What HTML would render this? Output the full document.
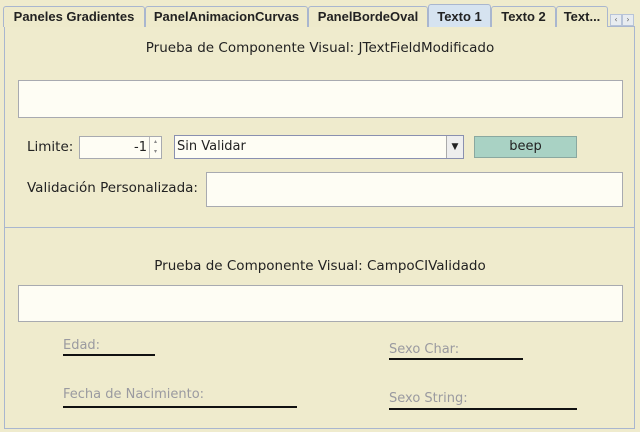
<!DOCTYPE html>
<html><head><meta charset="utf-8"><style>
*{margin:0;padding:0;box-sizing:border-box}
body{width:640px;height:432px;background:#efebcd;font-family:"DejaVu Sans","Liberation Sans",sans-serif;position:relative;overflow:hidden;color:#222}
.a{position:absolute}
.tab{position:absolute;top:6px;height:21px;border:1px solid #a9b6cf;border-bottom:none;border-radius:3px 3px 0 0;background:#eeeacb;font:bold 13px "Liberation Sans",sans-serif;text-align:center;line-height:20px;color:#222;white-space:nowrap}
.in{position:absolute;background:#fefdf4;border:1px solid #a8aab0}
.t{position:absolute;font-size:13.5px;white-space:nowrap}
.g{position:absolute;font-size:13px;color:#9a9aa0;white-space:nowrap}
.ln{position:absolute;height:2px;background:#111}
</style></head><body>
<div class="a" style="left:4px;top:26px;width:631px;height:403px;border:1px solid #a9b6cf"></div>
<div class="tab" style="left:3px;width:142px">Paneles Gradientes</div>
<div class="tab" style="left:145px;width:163px">PanelAnimacionCurvas</div>
<div class="tab" style="left:308px;width:120px">PanelBordeOval</div>
<div class="tab" style="left:428px;top:4px;height:23px;width:63px;background:#d6e3f0;line-height:24px">Texto 1</div>
<div class="tab" style="left:491px;width:65px">Texto 2</div>
<div class="tab" style="left:556px;width:52px">Text...</div>
<div class="a" style="left:610px;top:14px;width:12px;height:12px;border:1px solid #b8c4d8;background:#e8ecf0;font-size:8px;color:#666;text-align:center;line-height:10px">‹</div>
<div class="a" style="left:622px;top:14px;width:12px;height:12px;border:1px solid #b8c4d8;background:#e8ecf0;font-size:8px;color:#666;text-align:center;line-height:10px">›</div>
<div class="t" style="left:0;width:640px;text-align:center;top:40px">Prueba de Componente Visual: JTextFieldModificado</div>
<div class="in" style="left:18px;top:80px;width:605px;height:38px"></div>
<div class="t" style="left:27px;top:139px">Limite:</div>
<div class="in" style="left:79px;top:136px;width:83px;height:23px"><span style="position:absolute;right:14px;top:3px;font-size:13px">-1</span><span style="position:absolute;right:0;top:0;width:12px;height:21px;border-left:1px solid #bbb;font-size:6px;color:#888;text-align:center;line-height:10px">▴<br>▾</span></div>
<div class="in" style="left:174px;top:135px;width:290px;height:24px;border-color:#8a90b0"><span style="position:absolute;left:2px;top:3px;font-size:13px">Sin Validar</span><span style="position:absolute;right:0;top:0;width:17px;height:22px;border-left:1px solid #aaa;background:#eee;font-size:9px;text-align:center;line-height:22px">▼</span></div>
<div class="a" style="left:474px;top:136px;width:103px;height:22px;background:#a9d2c4;border:1px solid #8aa8a0;font-size:13px;text-align:center;line-height:20px">beep</div>
<div class="t" style="left:27px;top:180px">Validación Personalizada:</div>
<div class="in" style="left:206px;top:172px;width:417px;height:35px"></div>
<div class="a" style="left:5px;top:227px;width:629px;height:1px;background:#a9b6cf"></div>
<div class="t" style="left:0;width:640px;text-align:center;top:258px">Prueba de Componente Visual: CampoCIValidado</div>
<div class="in" style="left:18px;top:285px;width:605px;height:37px"></div>
<div class="g" style="left:63px;top:338px">Edad:</div><div class="ln" style="left:63px;top:354px;width:92px"></div>
<div class="g" style="left:389px;top:342px">Sexo Char:</div><div class="ln" style="left:389px;top:358px;width:134px"></div>
<div class="g" style="left:63px;top:387px">Fecha de Nacimiento:</div><div class="ln" style="left:63px;top:406px;width:234px"></div>
<div class="g" style="left:389px;top:391px">Sexo String:</div><div class="ln" style="left:389px;top:408px;width:188px"></div>
</body></html>
